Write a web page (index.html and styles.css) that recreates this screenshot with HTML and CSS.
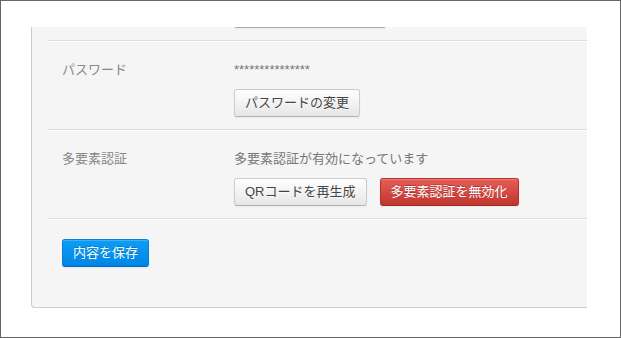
FILE: index.html
```html
<!DOCTYPE html>
<html lang="ja">
  <head>
    <meta charset="UTF-8" />
    <meta name="viewport" content="width=device-width, initial-scale=1.0" />
    <title>アカウント設定</title>
    <link rel="stylesheet" href="styles.css">
  </head>
  <body>
    <div class="frame">
      <div class="viewport">
        <div class="panel">
          <!-- 上の行のボタンが少しだけ見えている -->
          <div class="cut"><span class="cut_btn"></span></div>

          <div class="row">
            <div class="row_label">パスワード</div>
            <div class="row_value">
              <p class="value_text">***************</p>
              <div class="actions">
                <button class="btn">パスワードの変更</button>
              </div>
            </div>
          </div>

          <div class="row">
            <div class="row_label">多要素認証</div>
            <div class="row_value">
              <p class="value_text">多要素認証が有効になっています</p>
              <div class="actions">
                <button class="btn">QRコードを再生成</button>
                <button class="btn btn_danger">多要素認証を無効化</button>
              </div>
            </div>
          </div>

          <div class="row row_save">
            <button class="btn btn_primary">内容を保存</button>
          </div>
        </div>
      </div>
    </div>
  </body>
</html>
```

FILE: styles.css
```css
*{
    margin: 0;
    padding: 0;
    box-sizing: border-box;
}
body{
    font-family: "Liberation Sans", "Noto Sans CJK JP", sans-serif;
    font-size: 13px;
    line-height: 20px;
    background-color: #fff;
}
.frame{
    width: 621px;
    height: 338px;
    border: 1px solid #666;
    padding: 26px 0 0 30px;
}
.viewport{
    width: 556px;
    height: 281px;
    overflow: hidden;
}
.panel{
    width: 700px;
    background-color: #f5f5f5;
    border-left: 1px solid #ccc;
    border-bottom: 1px solid #ccc;
    border-bottom-left-radius: 4px;
    padding-left: 15px;
}
.cut{
    padding: 0 0 12px 188px;
}
.cut_btn{
    display: block;
    width: 150px;
    height: 1px;
    background-color: #adadad;
    box-shadow: 0 1px 2px rgba(0, 0, 0, 0.06);
}
.row{
    display: flex;
    border-top: 1px solid #ddd;
    box-shadow: inset 0 1px 0 #fff;
    padding: 19px 0 12px 15px;
}
.row_label{
    width: 172px;
    color: #888;
}
.value_text{
    color: #777;
}
.actions{
    display: flex;
    gap: 13px;
    margin-top: 9px;
}
.row_save{
    padding: 20px 0 40px 15px;
}
.btn{
    font: inherit;
    line-height: 18px;
    padding: 4px 10px;
    border: 1px solid #ccc;
    border-bottom-color: #b3b3b3;
    border-radius: 3px;
    background: linear-gradient(#fff, #e6e6e6);
    color: #444;
    text-shadow: 0 1px 1px rgba(255, 255, 255, 0.75);
    box-shadow: inset 0 1px 0 rgba(255, 255, 255, 0.2), 0 1px 2px rgba(0, 0, 0, 0.05);
    cursor: pointer;
}
.btn_danger{
    background: linear-gradient(#e85c57, #c1352f);
    border-color: #b8322c #b8322c #9c2a25;
    color: #fff;
    text-shadow: 0 -1px 0 rgba(0, 0, 0, 0.25);
}
.btn_primary{
    background: linear-gradient(#0d9ef4, #0085e6);
    border-color: #0a7fd8 #0a7fd8 #0668b8;
    color: #fff;
    text-shadow: 0 -1px 0 rgba(0, 0, 0, 0.2);
}
```
